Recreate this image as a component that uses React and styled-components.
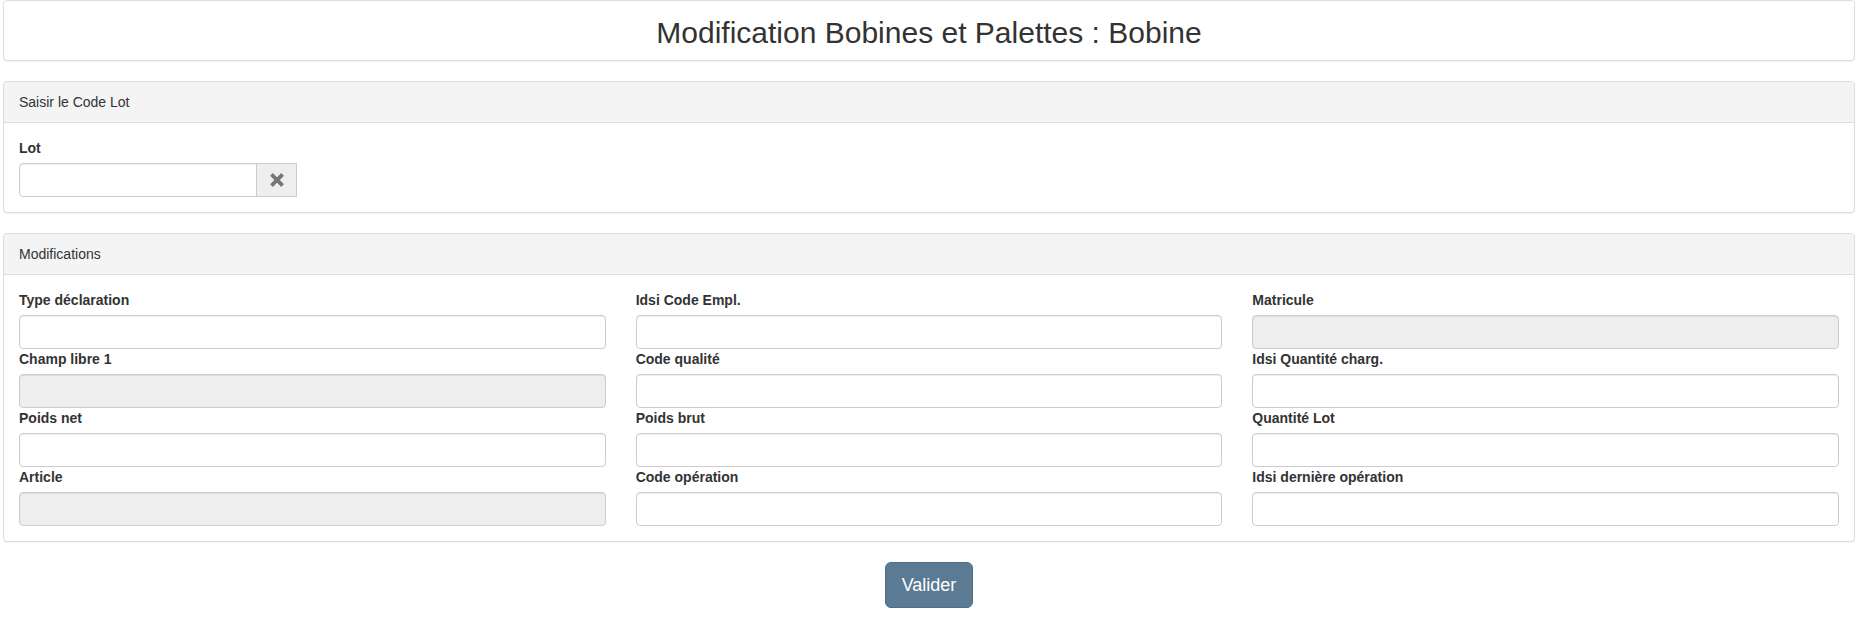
import styled, { createGlobalStyle } from "styled-components";

const GlobalStyle = createGlobalStyle`
  html, body {
    margin: 0;
    padding: 0;
    background: #fff;
  }
  body {
    font-family: "Liberation Sans", Arial, Helvetica, sans-serif;
    font-size: 14px;
    line-height: 1.42857;
    color: #333;
  }
  * {
    box-sizing: border-box;
  }
`;

const fields = [
  { label: "Type déclaration" },
  { label: "Idsi Code Empl." },
  { label: "Matricule", disabled: true },
  { label: "Champ libre 1", disabled: true },
  { label: "Code qualité" },
  { label: "Idsi Quantité charg." },
  { label: "Poids net" },
  { label: "Poids brut" },
  { label: "Quantité Lot" },
  { label: "Article", disabled: true },
  { label: "Code opération" },
  { label: "Idsi dernière opération" },
];

const RemoveIcon = () => (
  <svg width="14" height="14" viewBox="0 0 14 14" aria-hidden="true">
    <path
      d="M2.8 2.8 L11.2 11.2 M11.2 2.8 L2.8 11.2"
      stroke="#777"
      strokeWidth="3.8"
      strokeLinecap="square"
      fill="none"
    />
  </svg>
);

const App = () => {
  return (
    <Page>
      <GlobalStyle />

      <Panel>
        <TitleBody>
          <Title>Modification Bobines et Palettes : Bobine</Title>
        </TitleBody>
      </Panel>

      <Panel>
        <PanelHeading>Saisir le Code Lot</PanelHeading>
        <PanelBody>
          <Label htmlFor="lot">Lot</Label>
          <InputGroup>
            <Input id="lot" $grouped />
            <AddonButton type="button" aria-label="Effacer">
              <RemoveIcon />
            </AddonButton>
          </InputGroup>
        </PanelBody>
      </Panel>

      <Panel>
        <PanelHeading>Modifications</PanelHeading>
        <PanelBody>
          <FieldGrid>
            {fields.map((f) => (
              <Field key={f.label}>
                <Label>{f.label}</Label>
                <Input disabled={f.disabled} />
              </Field>
            ))}
          </FieldGrid>
        </PanelBody>
      </Panel>

      <Actions>
        <SubmitButton type="button">Valider</SubmitButton>
      </Actions>
    </Page>
  );
};

export default App;

// Styled Components
const Page = styled.div`
  padding: 0 9px 0 3px;
`;

const Panel = styled.section`
  background: #fff;
  border: 1px solid #ddd;
  border-radius: 4px;
  box-shadow: 0 1px 1px rgba(0, 0, 0, 0.05);
  margin-bottom: 20px;
  overflow: hidden;
`;

const TitleBody = styled.div`
  padding: 15px 15px 11px;
  text-align: center;
`;

const Title = styled.h2`
  margin: 0;
  font-size: 30px;
  font-weight: 400;
  line-height: 33px;
  color: #333;
`;

const PanelHeading = styled.div`
  background: #f4f4f4;
  border-bottom: 1px solid #ddd;
  padding: 10px 15px;
  font-size: 14px;
  line-height: 20px;
  color: #333;
`;

const PanelBody = styled.div`
  padding: 15px;
`;

const Label = styled.label`
  display: block;
  font-weight: 700;
  font-size: 14px;
  line-height: 20px;
  margin-bottom: 5px;
  color: #333;
`;

const InputGroup = styled.div`
  display: flex;
  width: 278px;
`;

const Input = styled.input`
  display: block;
  width: 100%;
  height: 34px;
  padding: 6px 12px;
  font-family: inherit;
  font-size: 14px;
  color: #555;
  background: ${(p) => (p.disabled ? "#eee" : "#fff")};
  border: 1px solid #ccc;
  border-radius: ${(p) => (p.$grouped ? "4px 0 0 4px" : "4px")};
  box-shadow: inset 0 1px 1px rgba(0, 0, 0, 0.075);
  outline: none;
`;

const AddonButton = styled.button`
  flex: 0 0 41px;
  height: 34px;
  margin-left: -1px;
  display: flex;
  align-items: center;
  justify-content: center;
  background: #eee;
  border: 1px solid #ccc;
  border-radius: 0;
  padding: 0;
  cursor: pointer;
`;

const FieldGrid = styled.div`
  display: grid;
  grid-template-columns: repeat(3, 1fr);
  column-gap: 30px;
`;

const Field = styled.div`
  min-width: 0;
`;

const Actions = styled.div`
  display: flex;
  justify-content: center;
`;

const SubmitButton = styled.button`
  font-family: inherit;
  font-size: 18px;
  line-height: 24px;
  padding: 10px 16px;
  color: #fff;
  background: #5b7b94;
  border: 1px solid #4f6e87;
  border-radius: 6px;
  cursor: pointer;
`;
